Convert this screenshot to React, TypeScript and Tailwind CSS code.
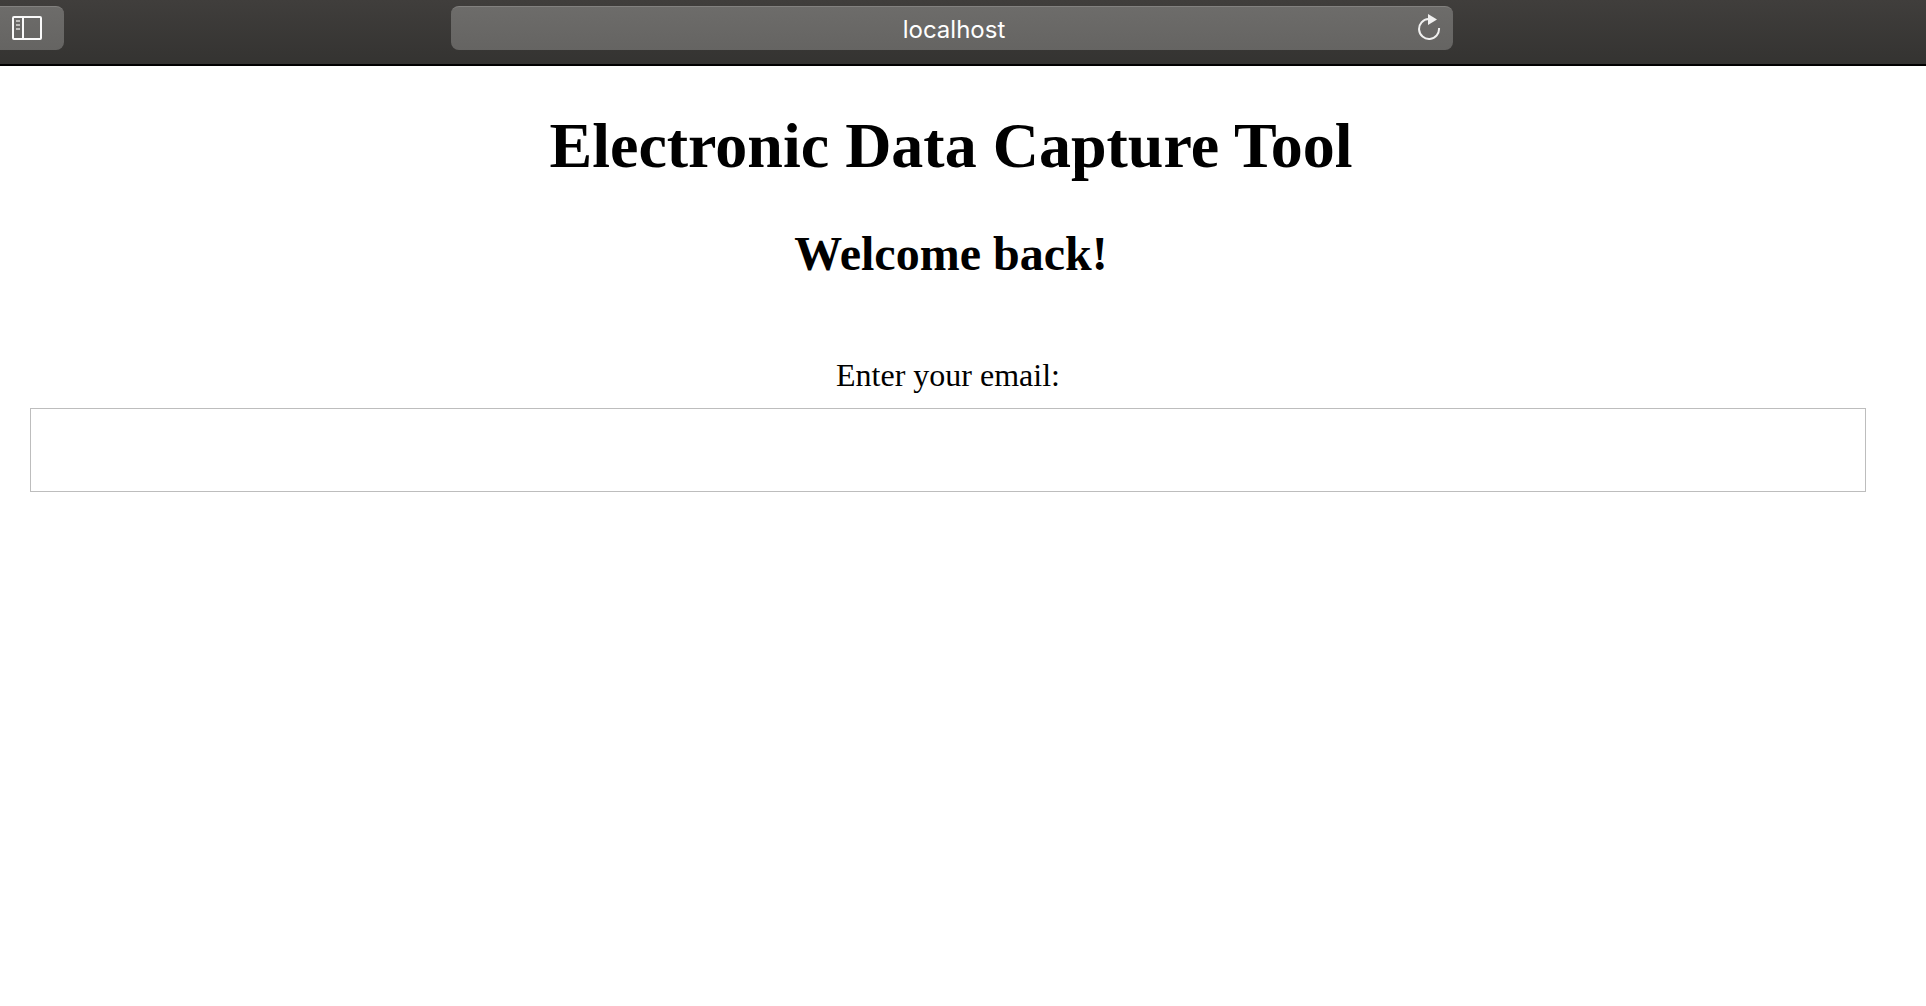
function SidebarIcon() {
  return (
    <svg width="30" height="24" viewBox="0 0 30 24" fill="none" aria-hidden="true">
      <rect x="1" y="1" width="28" height="22" rx="1" stroke="#fafafa" strokeWidth="2" />
      <path d="M11 1v22" stroke="#fafafa" strokeWidth="2" />
      <path d="M4 5h4M4 9h4M4 13h4" stroke="#bdbcba" strokeWidth="2" />
    </svg>
  );
}

function ReloadIcon() {
  return (
    <svg width="24" height="27" viewBox="0 0 24 27" fill="none" aria-hidden="true">
      <path d="M22 15A10 10 0 1 1 11.5 6" stroke="#f0f0ef" strokeWidth="2" />
      <path d="M11 1v11l9-5.5z" fill="#f0f0ef" />
    </svg>
  );
}

function BrowserBar() {
  return (
    <header className="grid h-[66px] grid-cols-[1fr_minmax(0,1002px)_1fr] items-start border-b-2 border-black bg-linear-to-b from-[#403e3c] to-[#343331] pt-1.5 pr-[22px]">
      <button
        type="button"
        aria-label="Show sidebar"
        className="flex h-11 w-16 items-center rounded-r-lg border-t border-[#82817f] bg-linear-to-b from-[#6d6c6a] to-[#656462] pb-px pl-3"
      >
        <SidebarIcon />
      </button>
      <div className="flex h-11 items-center rounded-lg border-t border-[#82817f] bg-linear-to-b from-[#6d6c6a] to-[#656462]">
        <input
          type="text"
          aria-label="Address"
          defaultValue="localhost"
          className="h-full min-w-0 flex-1 bg-transparent pt-0.5 pl-10 text-center font-['Inter','Liberation_Sans',sans-serif] text-2xl text-white outline-none"
        />
        <button type="button" aria-label="Reload page" className="mr-3 -mt-1">
          <ReloadIcon />
        </button>
      </div>
    </header>
  );
}

export default function App() {
  return (
    <div className="min-h-screen bg-white font-['Liberation_Serif',serif] text-black">
      <BrowserBar />
      <main className="pt-11 text-center">
        <div className="pr-6">
          <h1 className="text-[64px] leading-[72px] font-bold">Electronic Data Capture Tool</h1>
          <h2 className="mt-11 text-5xl leading-14 font-bold">Welcome back!</h2>
        </div>
        <form className="mt-[75px] flex flex-col pr-[60px] pl-[30px]">
          <label htmlFor="email" className="text-[32px] leading-9">
            Enter your email:
          </label>
          <input
            id="email"
            type="email"
            className="mt-[15px] h-[84px] w-full border border-[#bdbdbd] bg-white px-4 text-[32px] outline-none"
          />
        </form>
      </main>
    </div>
  );
}
